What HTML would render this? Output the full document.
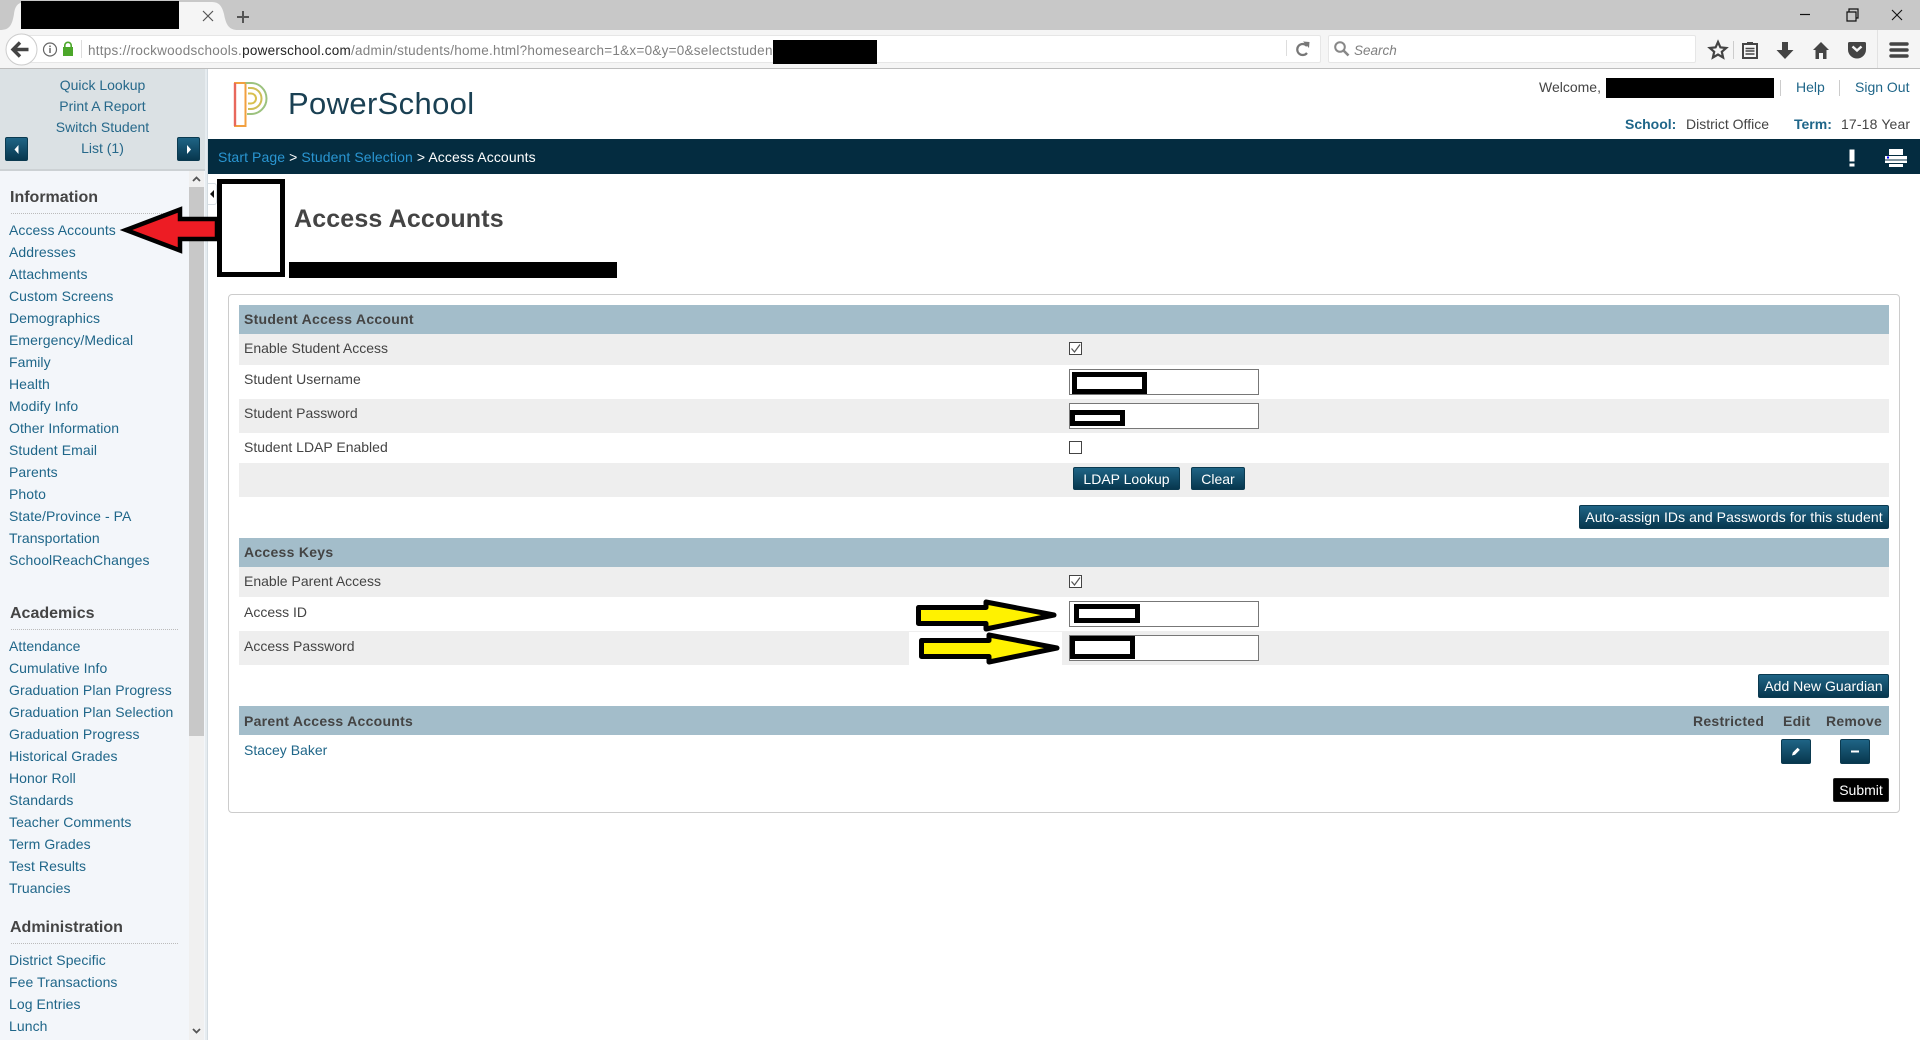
<!DOCTYPE html>
<html lang="en"><head><meta charset="utf-8"><title>Access Accounts</title>
<style>
*{box-sizing:border-box}
html,body{margin:0;padding:0;width:1920px;height:1040px;overflow:hidden;background:#fff;font-family:"Liberation Sans",sans-serif;font-size:14px;color:#444}
.a,.t{position:absolute}
.t{white-space:nowrap;line-height:20px;height:20px}
.l{color:#1f6689}
.nav{position:absolute;left:9px;white-space:nowrap;line-height:20px;color:#1f6689;letter-spacing:.07px}
.h{position:absolute;left:10px;font-weight:bold;font-size:16px;line-height:20px;color:#444}
.dot{position:absolute;left:11px;width:167px;border-top:1px dotted #bbb;height:0}
.pl{position:absolute;left:0;width:205px;text-align:center;line-height:20px;color:#26688a}
.hd{position:absolute;left:239px;width:1650px;height:29px;background:#a3bdca}
.b{position:absolute;font-weight:bold;line-height:20px;color:#444;white-space:nowrap;letter-spacing:.27px}
.g{position:absolute;left:239px;width:1650px;background:#eee}
.btn{position:absolute;color:#fff;text-align:center;white-space:nowrap;line-height:22px;border:1px solid #0b3a50;border-radius:2px;background:linear-gradient(#1f6485,#07374e)}
.inp{position:absolute;left:1069px;width:190px;height:26px;background:#fff;border:1px solid #777}
.red{position:absolute;background:#fff;border:5px solid #000}
.cb{position:absolute;left:1069px;width:13px;height:13px;background:#fff;border:1px solid #444}
.k{position:absolute;background:#000}
</style></head><body>

<!-- browser chrome -->
<div class="a" style="left:0;top:0;width:1920px;height:30px;background:#c8c8c8"></div>
<div class="a" style="left:0;top:30px;width:1920px;height:38px;background:#f5f5f5"></div>
<div class="a" style="left:0;top:68px;width:1920px;height:1px;background:#bdbdbd"></div>
<svg class="a" style="left:0;top:0" width="250" height="32"><path d="M0 30C9 30 12 26 14 14C15 6 18 2 26 2H212C219 2 222 6 224 14C226 25 229 30 238 30Z" fill="#f5f5f5"/>
<path d="M203 11l10 10M213 11l-10 10" stroke="#555" stroke-width="1.2" fill="none"/>
<path d="M243 11v12M237 17h12" stroke="#555" stroke-width="2" fill="none"/></svg>
<div class="k" style="left:21px;top:1px;width:158px;height:28px"></div>

<div class="a" style="left:20px;top:35px;width:1301px;height:28px;background:#fff;border:1px solid #e6e6e6;border-radius:2px"></div>
<div class="a" style="left:1328px;top:35px;width:368px;height:28px;background:#fff;border:1px solid #e6e6e6;border-radius:2px"></div>
<svg class="a" style="left:0;top:30px" width="100" height="38"><circle cx="21.5" cy="19.5" r="15.5" fill="#fff" stroke="#ccc"/>
<path d="M13.5 19.5h15M20 12.5l-7 7 7 7" fill="none" stroke="#444" stroke-width="3.4"/>
<circle cx="50" cy="19.5" r="6.5" fill="none" stroke="#666" stroke-width="1.2"/><path d="M50 18v5M50 15.5v1.6" stroke="#666" stroke-width="1.5"/>
<path d="M65 12.5v-2a3.2 3.2 0 0 1 6.4 0v2" fill="none" stroke="#4ca72a" stroke-width="1.6" transform="translate(-.2 5)"/><rect x="63" y="17" width="10" height="9" fill="#4ca72a"/>
<path d="M81.5 10v18" stroke="#ddd"/></svg>
<div class="t" style="left:88px;top:41px;color:#808080;font-size:13.5px;letter-spacing:.26px">https://rockwoodschools.<span style="color:#222">powerschool.com</span>/admin/students/home.html?homesearch=1&amp;x=0&amp;y=0&amp;selectstuden</div>
<div class="k" style="left:773px;top:40px;width:104px;height:24px"></div>
<svg class="a" style="left:1280px;top:30px" width="640" height="38">
<path d="M6.5 6v16" stroke="#ddd" transform="translate(0 4)"/>
<path d="M27 16a5.5 5.5 0 1 0 0 7" fill="none" stroke="#777" stroke-width="2.2"/><path d="M23 11.5l6.5 .5-.5 6z" fill="#777"/>
<circle cx="60" cy="17" r="4.8" fill="none" stroke="#888" stroke-width="2"/><path d="M63.5 20.5l5 5" stroke="#888" stroke-width="2.6"/>
<path d="M438 12l2.4 5.4 5.8.6-4.4 3.8 1.3 5.7-5.1-3-5.1 3 1.3-5.7-4.4-3.8 5.8-.6z" fill="none" stroke="#444" stroke-width="2.2"/>
<path d="M453.5 11v18" stroke="#ccc"/>
<path d="M463 14h14v14h-14z" fill="none" stroke="#444" stroke-width="2"/><path d="M467 12h6v3h-6z" fill="#444"/><path d="M465.5 18.5h9M465.5 21h9M465.5 24h9" stroke="#444" stroke-width="1.6"/>
<path d="M502 12h6v8h5.5l-8.5 9-8.500-9h5.500z" fill="#444"/>
<path d="M541 11l8 8h-2.500v9h-3.500v-6h-4v6h-3.500v-9H533z" fill="#444" transform="translate(0 1)"/>
<path d="M569.500 12h15a1.500 1.500 0 0 1 1.500 1.500v6a9 9 0 0 1-18 0v-6a1.500 1.500 0 0 1 1.500-1.500z" fill="#444"/><path d="M572.500 16.500l4.500 4 4.500-4" fill="none" stroke="#f5f5f5" stroke-width="2.400"/>
<path d="M597.500 0v38" stroke="#e2e2e2"/>
<path d="M611 14h16M611 20h16M611 26h16" stroke="#444" stroke-width="3.400" stroke-linecap="round"/>
</svg>
<div class="t" style="left:1354px;top:41px;font-style:italic;color:#808080;font-size:13.5px">Search</div>
<svg class="a" style="left:1780px;top:0" width="140" height="30">
<path d="M20 14.500h10" stroke="#111" stroke-width="1.200"/>
<path d="M67 12h9v9h-9z" fill="none" stroke="#111" stroke-width="1.200"/><path d="M69 12v-3h9v9h-2" fill="none" stroke="#111" stroke-width="1.200"/>
<path d="M112 9.500l10 10M122 9.500l-10 10" stroke="#111" stroke-width="1.100" transform="translate(0 .5)"/>
</svg>

<!-- sidebar -->
<div class="a" style="left:0;top:69px;width:205px;height:100px;background:#dbe1e4"></div>
<div class="a" style="left:0;top:169px;width:205px;height:871px;background:#f3f6fa;border-top:2px solid #ccd1d4"></div>
<div class="a" style="left:205px;top:69px;width:3px;height:971px;background:#e6ecf0;border-right:1px solid #d3dbe1"></div>
<div class="pl" style="top:75px">Quick Lookup</div>
<div class="pl" style="top:96px">Print A Report</div>
<div class="pl" style="top:117px">Switch Student</div>
<div class="pl" style="top:138px">List (1)</div>
<div class="btn" style="left:5px;top:137px;width:23px;height:24px"></div>
<div class="btn" style="left:177px;top:137px;width:23px;height:24px"></div>
<svg class="a" style="left:0;top:130px" width="205" height="40"><path d="M18.500 15v9l-4-4.500z" fill="#fff"/><path d="M187 15v9l4-4.500z" fill="#fff"/></svg>

<div class="a" style="left:189px;top:171px;width:15px;height:869px;background:#f0f0f0"></div>
<div class="a" style="left:189px;top:187px;width:15px;height:549px;background:#c8c8c8"></div>
<svg class="a" style="left:189px;top:171px" width="15" height="16"><path d="M4 10l3.500-3.500L11 10" fill="none" stroke="#555" stroke-width="1.800"/></svg>
<svg class="a" style="left:189px;top:1024px" width="15" height="16"><path d="M4 5l3.500 3.500L11 5" fill="none" stroke="#555" stroke-width="1.800"/></svg>

<div class="h" style="top:188px">Information</div><div class="dot" style="top:213px"></div>
<div class="nav" style="top:220px">Access Accounts</div>
<div class="nav" style="top:242px">Addresses</div>
<div class="nav" style="top:264px">Attachments</div>
<div class="nav" style="top:286px">Custom Screens</div>
<div class="nav" style="top:308px">Demographics</div>
<div class="nav" style="top:330px">Emergency/Medical</div>
<div class="nav" style="top:352px">Family</div>
<div class="nav" style="top:374px">Health</div>
<div class="nav" style="top:396px">Modify Info</div>
<div class="nav" style="top:418px">Other Information</div>
<div class="nav" style="top:440px">Student Email</div>
<div class="nav" style="top:462px">Parents</div>
<div class="nav" style="top:484px">Photo</div>
<div class="nav" style="top:506px">State/Province - PA</div>
<div class="nav" style="top:528px">Transportation</div>
<div class="nav" style="top:550px">SchoolReachChanges</div>

<div class="h" style="top:604px">Academics</div><div class="dot" style="top:629px"></div>
<div class="nav" style="top:636px">Attendance</div>
<div class="nav" style="top:658px">Cumulative Info</div>
<div class="nav" style="top:680px">Graduation Plan Progress</div>
<div class="nav" style="top:702px">Graduation Plan Selection</div>
<div class="nav" style="top:724px">Graduation Progress</div>
<div class="nav" style="top:746px">Historical Grades</div>
<div class="nav" style="top:768px">Honor Roll</div>
<div class="nav" style="top:790px">Standards</div>
<div class="nav" style="top:812px">Teacher Comments</div>
<div class="nav" style="top:834px">Term Grades</div>
<div class="nav" style="top:856px">Test Results</div>
<div class="nav" style="top:878px">Truancies</div>

<div class="h" style="top:918px">Administration</div><div class="dot" style="top:943px"></div>
<div class="nav" style="top:950px">District Specific</div>
<div class="nav" style="top:972px">Fee Transactions</div>
<div class="nav" style="top:994px">Log Entries</div>
<div class="nav" style="top:1016px">Lunch</div>

<!-- header -->
<svg class="a" style="left:232px;top:80px" width="38" height="50" viewBox="232 80 38 50" fill="none">
<path d="M235 83h10.500v43H235z" stroke="#f2a03f" stroke-width="2"/><path d="M235 83v43" stroke="#e8685c" stroke-width="2.400"/>
<path d="M245.500 83H251a15.500 15.500 0 0 1 0 31h-4" stroke="#9cc27e" stroke-width="2"/>
<path d="M248 88h3a10.500 10.500 0 0 1 0 21h-3" stroke="#cfbe55" stroke-width="2"/>
<path d="M248 93.500h3a5 5 0 0 1 0 10h-3" stroke="#d9c04e" stroke-width="2"/></svg>
<div class="a" style="left:288px;top:85px;font-size:31px;line-height:38px;color:#1a4053;white-space:nowrap;letter-spacing:.35px">PowerSchool</div>

<div class="t" style="left:1539px;top:77px">Welcome,</div>
<div class="k" style="left:1606px;top:78px;width:168px;height:20px"></div>
<div class="a" style="left:1780px;top:80px;width:1px;height:16px;background:#ccc"></div>
<div class="t l" style="left:1796px;top:77px">Help</div>
<div class="a" style="left:1839px;top:80px;width:1px;height:16px;background:#ccc"></div>
<div class="t l" style="left:1855px;top:77px">Sign Out</div>
<div class="t" style="left:1625px;top:114px;font-weight:bold;color:#1f6689">School:</div>
<div class="t" style="left:1686px;top:114px">District Office</div>
<div class="t" style="left:1794px;top:114px;font-weight:bold;color:#1f6689">Term:</div>
<div class="t" style="left:1841px;top:114px;letter-spacing:.15px">17-18 Year</div>

<div class="a" style="left:208px;top:139px;width:1712px;height:35px;background:#042c40"></div>
<div class="t" style="left:218px;top:147px;color:#fff;letter-spacing:.1px"><span style="color:#2a96d2">Start Page</span> &gt; <span style="color:#2a96d2">Student Selection</span> &gt; Access Accounts</div>
<svg class="a" style="left:1840px;top:145px" width="75" height="24" fill="#fff">
<path d="M9.500 5h5v12h-5zM9.500 19h5v3h-5z" transform="translate(0 -.5)"/>
<path d="M49 4h14v6H49zM45 11h22v7H45zM49 19h14v3H49z"/><path d="M45 15h22" stroke="#042c40"/><rect x="47" y="11.500" width="2" height="2" fill="#00f"/></svg>

<!-- page -->
<svg class="a" style="left:210px;top:174px" width="14" height="8"><path d="M6 1l4.500 5h-9z" fill="#fff"/></svg>
<div class="a" style="left:208px;top:183px;width:9px;height:22px;background:#fff;border:1px solid #d6dde2;border-left:0;border-radius:0 3px 3px 0"></div>
<svg class="a" style="left:208px;top:183px" width="9" height="22"><path d="M6 7v8l-4-4z" fill="#111"/></svg>

<div class="red" style="left:217px;top:179px;width:68px;height:98px"></div>
<svg class="a" style="left:118px;top:203px" width="100" height="54"><path d="M8 27L62 6.500V16H99V36H62V47.500Z" fill="#ed1c24" stroke="#000" stroke-width="4.500"/></svg>
<div class="a" style="left:294px;top:203px;font-size:25px;line-height:32px;font-weight:bold;color:#444;white-space:nowrap;letter-spacing:.15px">Access Accounts</div>
<div class="k" style="left:289px;top:262px;width:328px;height:16px"></div>

<div class="a" style="left:228px;top:294px;width:1672px;height:519px;border:1px solid #ccc;border-radius:4px"></div>

<div class="hd" style="top:305px"></div><div class="b" style="left:244px;top:309px">Student Access Account</div>
<div class="g" style="top:334px;height:31px"></div>
<div class="g" style="top:399px;height:34px"></div>
<div class="g" style="top:463px;height:34px"></div>
<div class="t" style="left:244px;top:338px">Enable Student Access</div>
<div class="t" style="left:244px;top:369px">Student Username</div>
<div class="t" style="left:244px;top:403px">Student Password</div>
<div class="t" style="left:244px;top:437px">Student LDAP Enabled</div>

<div class="cb" style="top:342px"></div>
<svg class="a" style="left:1069px;top:342px" width="13" height="13"><path d="M2.500 6.500l3 3.500 5.500-7.500" fill="none" stroke="#555" stroke-width="1.200"/></svg>
<div class="inp" style="top:369px"></div><div class="red" style="left:1072px;top:372px;width:75px;height:22px"></div>
<div class="inp" style="top:403px"></div><div class="red" style="left:1070px;top:410px;width:55px;height:16px"></div>
<div class="cb" style="top:441px"></div>
<div class="btn" style="left:1073px;top:467px;width:107px;height:23px">LDAP Lookup</div>
<div class="btn" style="left:1191px;top:467px;width:54px;height:23px">Clear</div>
<div class="btn" style="left:1579px;top:505px;width:310px;height:24px;letter-spacing:.07px">Auto-assign IDs and Passwords for this student</div>

<div class="hd" style="top:538px"></div><div class="b" style="left:244px;top:542px">Access Keys</div>
<div class="g" style="top:567px;height:30px"></div>
<div class="g" style="top:631px;height:34px"></div>
<div class="t" style="left:244px;top:571px">Enable Parent Access</div>
<div class="t" style="left:244px;top:602px">Access ID</div>
<div class="t" style="left:244px;top:636px">Access Password</div>
<div class="cb" style="top:575px"></div>
<svg class="a" style="left:1069px;top:575px" width="13" height="13"><path d="M2.500 6.500l3 3.500 5.500-7.500" fill="none" stroke="#555" stroke-width="1.200"/></svg>
<div class="inp" style="top:601px"></div><div class="red" style="left:1074px;top:604px;width:66px;height:19px"></div>
<div class="inp" style="top:635px"></div><div class="red" style="left:1070px;top:636px;width:65px;height:23px"></div>
<div class="a" style="left:909px;top:632px;width:153px;height:33px;background:#fff"></div>
<svg class="a" style="left:910px;top:595px" width="155" height="75">
<path d="M8.500 12.500H76V7L144 20 76 34V28.500H8.500z" fill="#fff200" stroke="#000" stroke-width="5" stroke-linejoin="round"/>
<path d="M11.500 45.500H79V40L147 53 79 67V61.500H11.500z" fill="#fff200" stroke="#000" stroke-width="5" stroke-linejoin="round"/></svg>

<div class="btn" style="left:1758px;top:674px;width:131px;height:24px">Add New Guardian</div>
<div class="hd" style="top:706px"></div>
<div class="b" style="left:244px;top:711px">Parent Access Accounts</div>
<div class="b" style="left:1693px;top:711px">Restricted</div>
<div class="b" style="left:1783px;top:711px">Edit</div>
<div class="b" style="left:1826px;top:711px">Remove</div>
<div class="t l" style="left:244px;top:740px">Stacey Baker</div>
<div class="btn" style="left:1781px;top:739px;width:30px;height:25px"></div>
<div class="btn" style="left:1840px;top:739px;width:30px;height:25px"></div>
<svg class="a" style="left:1781px;top:739px" width="90" height="25"><path d="M11 16.500l.8-3 4.800-4.800 2.200 2.200-4.800 4.800z" fill="#fff"/><rect x="70" y="11.500" width="8" height="2" fill="#fff"/></svg>
<div class="btn" style="left:1833px;top:778px;width:56px;height:24px;background:#000;border-color:#222">Submit</div>

</body></html>
